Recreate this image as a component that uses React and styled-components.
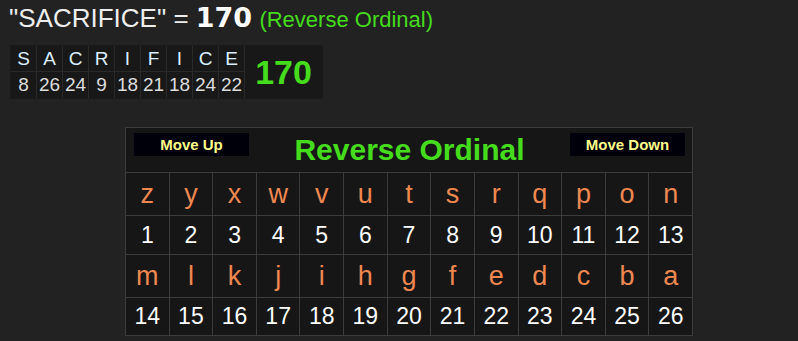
import React from 'react'
import styled, { createGlobalStyle } from 'styled-components'

const GlobalStyle = createGlobalStyle`
  body {
    margin: 0;
    background: #222222;
    font-family: "Liberation Sans", Arial, sans-serif;
  }
`;

const Page = styled.div`
  padding: 3px 0 0 9px;
`;
const Title = styled.div`
  color: #eeeeee;
  font-size: 26px;
  line-height: 30px;
  white-space: nowrap;
`;
const Total = styled.b`
  color: #ffffff;
  font-family: "DejaVu Sans", Verdana, sans-serif;
  font-size: 27px;
`;
const CipherName = styled.span`
  color: #46dc1e;
  font-size: 22px;
`;
const Breakdown = styled.div`
  display: inline-grid;
  grid-template-columns: repeat(9, 25px) 77px;
  grid-template-rows: 25px 26px;
  gap: 1px;
  margin: 10px 0 0 1px;
  background: #2a2a2a;
  border: 1px solid #191919;
`;
const WordCell = styled.div`
  display: flex;
  align-items: center;
  justify-content: center;
  background: #181818;
  font-size: 19px;
  color: ${({ letter }) => (letter ? '#dcefff' : '#dddddd')};
`;
const SumCell = styled.div`
  grid-column: 10;
  grid-row: 1 / span 2;
  display: flex;
  align-items: center;
  justify-content: center;
  background: #181818;
  color: #46dc1e;
  font-size: 34px;
  font-weight: bold;
`;
const Panel = styled.div`
  display: grid;
  grid-template-columns: repeat(13, 1fr);
  grid-template-rows: 44px 42px 38px 42px 37px;
  gap: 1px;
  width: 568px;
  box-sizing: border-box;
  margin: 28px 0 0 116px;
  background: #3c3c3c;
  border: 1px solid #3c3c3c;
`;
const PanelHeader = styled.div`
  grid-column: 1 / -1;
  display: flex;
  align-items: center;
  justify-content: space-between;
  padding: 0 7px 0 8px;
  background: #161616;
`;
const MoveButton = styled.div`
  align-self: flex-start;
  margin-top: 5px;
  width: 115px;
  height: 23px;
  display: flex;
  align-items: center;
  justify-content: center;
  background: #00000a;
  color: #ffff8c;
  font-size: 15px;
  font-weight: bold;
`;
const PanelTitle = styled.div`
  color: #46dc1e;
  font-size: 30px;
  font-weight: bold;
`;
const Cell = styled.div`
  display: flex;
  align-items: center;
  justify-content: center;
  background: #161616;
  color: ${({ letter }) => (letter ? '#ef8750' : '#ffffff')};
  font-size: ${({ letter }) => (letter ? '27px' : '23px')};
`;

const word = 'SACRIFICE';
const reverse = (ch) => 27 - (ch.toLowerCase().charCodeAt(0) - 96);
const values = word.split('').map(reverse);
const total = values.reduce((a, b) => a + b, 0);

const alphabet = 'zyxwvutsrqponmlkjihgfedcba'.split('');
const rows = [alphabet.slice(0, 13), alphabet.slice(13)];

export default function App() {
  return (
    <Page>
      <GlobalStyle />
      <Title>
        "{word}" = <Total>{total}</Total> <CipherName>(Reverse Ordinal)</CipherName>
      </Title>
      <Breakdown>
        {word.split('').map((ch, i) => (
          <WordCell key={'l' + i} letter style={{ gridRow: 1 }}>{ch}</WordCell>
        ))}
        {values.map((v, i) => (
          <WordCell key={'n' + i} style={{ gridRow: 2 }}>{v}</WordCell>
        ))}
        <SumCell>{total}</SumCell>
      </Breakdown>
      <Panel>
        <PanelHeader>
          <MoveButton>Move Up</MoveButton>
          <PanelTitle>Reverse Ordinal</PanelTitle>
          <MoveButton>Move Down</MoveButton>
        </PanelHeader>
        {rows.map((row, r) => (
          <React.Fragment key={r}>
            {row.map((ch) => (
              <Cell key={ch} letter>{ch}</Cell>
            ))}
            {row.map((ch, i) => (
              <Cell key={ch + 'n'}>{r * 13 + i + 1}</Cell>
            ))}
          </React.Fragment>
        ))}
      </Panel>
    </Page>
  )
}
